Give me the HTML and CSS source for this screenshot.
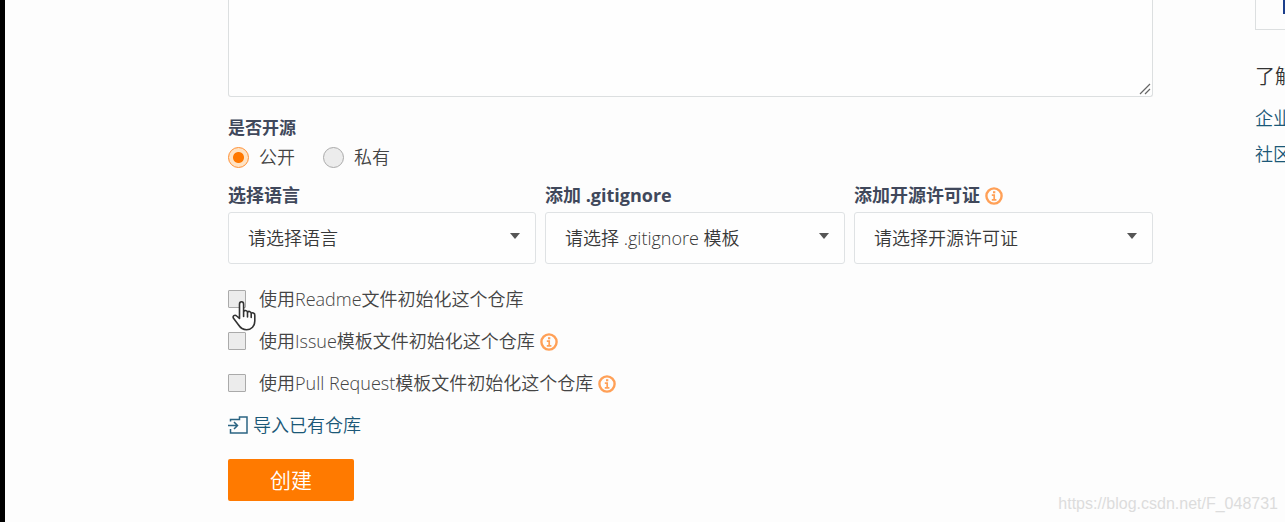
FILE: index.html
```html
<!DOCTYPE html>
<html lang="zh-CN">
<head>
<meta charset="utf-8">
<meta name="viewport" content="width=device-width, initial-scale=1">
<title>新建仓库</title>
<link rel="stylesheet" href="styles.css">
</head>
<body>
<svg class="defs" width="0" height="0" aria-hidden="true">
  <symbol id="info" viewBox="0 0 18 18">
    <circle cx="9" cy="9" r="7.6" fill="none" stroke="currentColor" stroke-width="2.4"/>
    <rect x="8" y="4.2" width="2.3" height="2.1" fill="currentColor"/>
    <path d="M6.8 8.1H9.2V12.6M6.8 12.8H11.4" fill="none" stroke="currentColor" stroke-width="1.7"/>
  </symbol>
</svg>
<div class="page">
  <form class="form">
    <div class="intro">
      <textarea class="intro-text" aria-label="仓库介绍"></textarea>
      <svg class="grip" viewBox="0 0 12 12" aria-hidden="true"><path d="M1 11L11 1M6 11L11 6"/></svg>
    </div>
    <fieldset class="visibility">
      <legend class="legend">是否开源</legend>
      <div class="radios">
        <label class="option"><input class="radio" type="radio" name="visibility" checked>公开</label>
        <label class="option"><input class="radio" type="radio" name="visibility">私有</label>
      </div>
    </fieldset>
    <div class="fields">
      <div class="field">
        <label class="label" for="language">选择语言</label>
        <div class="dropdown"><select class="select" id="language"><option>请选择语言</option></select></div>
      </div>
      <div class="field">
        <label class="label" for="ignore">添加 .gitignore</label>
        <div class="dropdown"><select class="select" id="ignore"><option>请选择 .gitignore 模板</option></select></div>
      </div>
      <div class="field">
        <label class="label" for="license">添加开源许可证 <svg class="info" aria-hidden="true"><use href="#info"/></svg></label>
        <div class="dropdown"><select class="select" id="license"><option>请选择开源许可证</option></select></div>
      </div>
    </div>
    <div class="checks">
      <label class="option"><span class="tick"><input class="checkbox" type="checkbox">
        <svg class="pointer" viewBox="0 0 24 32" aria-hidden="true"><path d="M7.5 18.5V4.2C7.5 1 11.6 1 11.6 4.2V12.2C12 9.8 15.2 10 15.5 12.5C16.2 10.7 19 11.2 19.2 13.5C20.2 12.2 22.8 12.8 22.8 15.2V21C22.8 26 19.5 29.8 14.5 29.8C10.2 29.8 8.3 27.8 6.4 24.8L1.5 18.3C.2 16 2.8 14.2 4.7 16ZM11.6 12V16.5M15.5 12.5V17M19.2 13.5V17.5"/></svg></span>使用Readme文件初始化这个仓库</label>
      <label class="option"><input class="checkbox" type="checkbox"><span>使用Issue模板文件初始化这个仓库 <svg class="info" aria-hidden="true"><use href="#info"/></svg></span></label>
      <label class="option"><input class="checkbox" type="checkbox"><span>使用Pull Request模板文件初始化这个仓库 <svg class="info" aria-hidden="true"><use href="#info"/></svg></span></label>
    </div>
    <a class="import" href="#"><svg class="import-icon" viewBox="0 0 20 18" aria-hidden="true"><path d="M2.5 5.5V3.5H11.5V1H19V17H2.5V13M0 9.5H9.5M6 6L9.5 9.5L6 13"/></svg>导入已有仓库</a>
    <button class="submit" type="button">创建</button>
  </form>
  <aside class="side">
    <div class="card"><span class="card-mark"></span></div>
    <h2 class="side-title">了解</h2>
    <a class="side-link" href="#">企业</a>
    <a class="side-link" href="#">社区</a>
  </aside>
</div>
<div class="watermark">https://blog.csdn.net/F_048731</div>
</body>
</html>
```
FILE: styles.css
```css
* { box-sizing: border-box; }

body {
  margin: 0;
  min-height: 100vh;
  overflow: hidden;
  border-left: 5px solid #000;
  background: #fdfdfd;
  color: #444;
  font: 350 18px/24px "Open Sans", "Noto Sans CJK SC", sans-serif;
}

.defs { position: absolute; }

.page {
  display: grid;
  grid-template-columns: minmax(0, 1fr) 30px;
  column-gap: 102px;
  padding-left: 223px;
}

.form { display: flex; flex-direction: column; align-items: stretch; }

.intro { position: relative; display: flex; margin-bottom: 20px; }

.intro-text {
  width: 100%;
  height: 97px;
  padding: 12px 20px;
  border: 1px solid #dcdfe0;
  border-top: 0;
  border-radius: 0 0 3px 3px;
  background: #fefefe;
  font: inherit;
  resize: none;
}

.grip {
  position: absolute;
  right: 2px;
  bottom: 2px;
  width: 12px;
  height: 12px;
  fill: none;
  stroke: #666;
  stroke-width: 1.2;
}

.visibility { margin: 0 0 14px; padding: 0; border: 0; }

.legend {
  padding: 0;
  margin-bottom: 6px;
  color: #40485b;
  font-size: 17px;
  font-weight: 700;
  line-height: 22px;
}

.radios { display: flex; gap: 28px; }

.option { display: flex; align-items: center; }

.radio, .checkbox {
  appearance: none;
  flex: none;
  margin: 0;
  border: 1px solid #aaa;
  background: #ececec;
}

.radio { width: 21px; height: 21px; margin-right: 10px; border-radius: 50%; }

.radio:checked {
  border-color: #ff8f33;
  background: radial-gradient(circle, #ff7800 5px, #ffe3c4 6px);
}

.fields {
  display: grid;
  grid-template-columns: 308fr 300fr 299fr;
  gap: 9px;
  margin-bottom: 23px;
}

.label {
  display: block;
  margin-bottom: 5px;
  color: #40485b;
  font-weight: 700;
  white-space: nowrap;
}

.info { width: 18px; height: 18px; color: #ffa057; vertical-align: -3px; }

.dropdown { position: relative; }

.dropdown::after {
  content: "";
  position: absolute;
  top: 21px;
  right: 16px;
  border: 5px solid transparent;
  border-top: 6px solid #555;
  border-bottom: 0;
  pointer-events: none;
}

.select {
  appearance: none;
  display: block;
  width: 100%;
  height: 52px;
  padding: 0 32px 0 19px;
  border: 1px solid #dfe2e4;
  border-radius: 3px;
  background: #fefefe;
  color: #383838;
  font: inherit;
}

.checks { display: grid; gap: 18px; margin-bottom: 18px; }

.checkbox { display: block; width: 18px; height: 18px; border-radius: 1px; }

.checks .option { gap: 13px; }

.tick { position: relative; }

.pointer {
  position: absolute;
  z-index: 1;
  top: 10px;
  left: 4px;
  width: 24px;
  height: 32px;
  fill: #fff;
  stroke: #333;
  stroke-width: 1.6;
  stroke-linejoin: round;
  stroke-linecap: round;
}

.import {
  display: flex;
  align-items: center;
  align-self: flex-start;
  gap: 5px;
  margin-bottom: 22px;
  color: #1b5877;
  text-decoration: none;
}

.import-icon { width: 20px; height: 18px; fill: none; stroke: #2b6482; stroke-width: 1.5; }

.submit {
  align-self: flex-start;
  padding: 8px 42px;
  border: 0;
  border-radius: 2px;
  background: #ff7a00;
  color: #fff;
  font: 350 21px/26px "Open Sans", "Noto Sans CJK SC", sans-serif;
}

.side { white-space: nowrap; }

.card {
  display: flex;
  justify-content: flex-end;
  height: 30px;
  margin-bottom: 34px;
  border: 1px solid #dcdfe0;
  border-width: 0 0 1px 1px;
}

.card-mark { width: 2px; height: 14px; background: #1c3f8c; }

.side-title { margin: 0 0 16px; color: #333; font-size: 20px; font-weight: 350; line-height: 26px; }

.side-link { display: block; margin-bottom: 12px; color: #1b5877; text-decoration: none; }

.watermark {
  position: absolute;
  right: 7px;
  bottom: 8px;
  color: #dcdcdc;
  font: 16px/20px "Liberation Sans", sans-serif;
}
```
